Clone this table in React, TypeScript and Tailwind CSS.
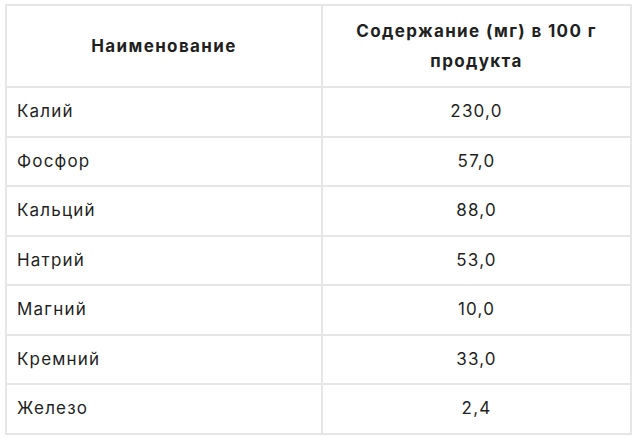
const rows: [string, string][] = [
  ["Калий", "230,0"],
  ["Фосфор", "57,0"],
  ["Кальций", "88,0"],
  ["Натрий", "53,0"],
  ["Магний", "10,0"],
  ["Кремний", "33,0"],
  ["Железо", "2,4"],
];

export default function App() {
  return (
    <div className="w-[637px] h-[438px] bg-white pl-[5px] pt-[4px]" style={{ fontFamily: "Inter, 'Noto Sans', sans-serif" }}>
      <table className="w-[625px] border-collapse text-[#1f1f1f] table-fixed">
        <colgroup>
          <col className="w-[316px]" />
          <col className="w-[309px]" />
        </colgroup>
        <thead>
          <tr className="h-[82px]">
            <th className="border-2 border-[#e6e6e6] text-[17px] tracking-[0.08em] font-bold leading-[30px] text-center px-[10px]">Наименование</th>
            <th className="border-2 border-[#e6e6e6] text-[17px] tracking-[0.08em] font-bold leading-[30px] text-center px-[20px]">Содержание (мг) в 100 г продукта</th>
          </tr>
        </thead>
        <tbody>
          {rows.map(([n, v]) => (
            <tr key={n} className="h-[49.5px]">
              <td className="border-2 border-[#e6e6e6] text-[17px] tracking-[0.07em] font-normal px-[10px]">{n}</td>
              <td className="border-2 border-[#e6e6e6] text-[17px] tracking-[0.07em] font-normal text-center">{v}</td>
            </tr>
          ))}
        </tbody>
      </table>
    </div>
  );
}
